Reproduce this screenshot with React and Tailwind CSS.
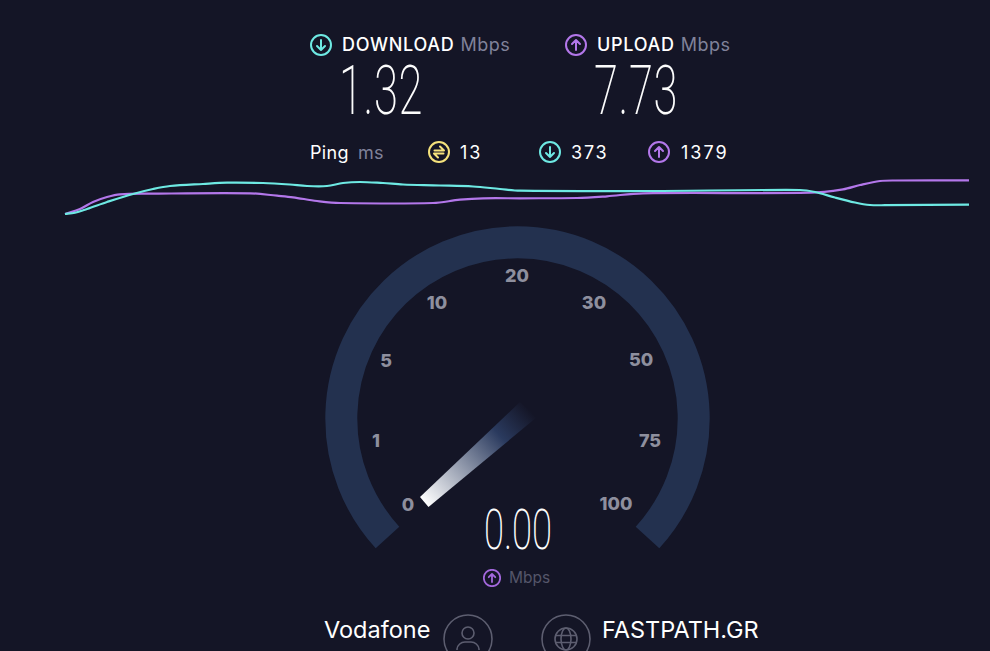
const cyanPts = [[65,214],[75,212.7],[87,209],[107,202],[133,194],[153,189],[170,186],[203,184],[227,182.7],[263,183],[290,184.5],[307,186],[327,186],[343,183],[360,182],[383,183],[403,184.5],[440,185.5],[473,186.5],[500,189],[520,190.7],[643,191],[800,190],[815,192],[835,197.5],[855,202.5],[870,205],[885,205.2],[969,204.7]];
const purplePts = [[65,214],[80,209],[93,202],[107,197],[120,194.3],[150,193.7],[250,193.3],[277,195.7],[293,197.3],[317,201],[340,203],[433,203],[460,199.7],[483,198.3],[520,198.3],[577,198],[607,196.3],[643,193.3],[810,192.7],[843,189.3],[860,185],[880,181],[895,180.5],[969,180.3]];

function smooth(pts, oy) {
  let d = `M${pts[0][0]} ${pts[0][1] - oy}`;
  for (let i = 0; i < pts.length - 1; i++) {
    const p0 = pts[Math.max(0, i - 1)], p1 = pts[i], p2 = pts[i + 1], p3 = pts[Math.min(pts.length - 1, i + 2)];
    const dx = p2[0] - p1[0];
    const m1 = (p2[1] - p0[1]) / (p2[0] - p0[0]);
    const m2 = (p3[1] - p1[1]) / (p3[0] - p1[0]);
    const c1x = p1[0] + dx / 3, c1y = p1[1] + (m1 * dx) / 3;
    const c2x = p2[0] - dx / 3, c2y = p2[1] - (m2 * dx) / 3;
    d += ` C${c1x.toFixed(1)} ${(c1y - oy).toFixed(1)} ${c2x.toFixed(1)} ${(c2y - oy).toFixed(1)} ${p2[0]} ${(p2[1] - oy).toFixed(1)}`;
  }
  return d;
}

function ArrowIcon({ dir, color, size = 22, sw = 2 }) {
  return (
    <svg width={size} height={size} viewBox="0 0 22 22" fill="none" stroke={color} strokeWidth={sw} strokeLinecap="round" strokeLinejoin="round" className="shrink-0">
      <circle cx="11" cy="11" r="10" />
      {dir === "down" ? <path d="M11 6v10M7 12l4 4 4-4" /> : <path d="M11 16V6M7 10l4-4 4 4" />}
    </svg>
  );
}

function PingIcon() {
  return (
    <svg width="22" height="22" viewBox="0 0 22 22" fill="none" stroke="#f5e27c" strokeWidth="2" strokeLinecap="round" strokeLinejoin="round" className="shrink-0">
      <circle cx="11" cy="11" r="10" />
      <path d="M6.5 9.5h9.5l-4-4M15.5 12.5H6l4 4" />
    </svg>
  );
}

const F = { fontFamily: 'Inter, "Noto Sans", sans-serif' };

function Big({ children }) {
  return (
    <div className="h-[72px] w-[140px] ml-[29px] origin-left scale-x-[0.64] opacity-[0.99] text-[68px] leading-[72px] font-extralight text-white whitespace-nowrap tracking-[1px]" style={{ fontFamily: 'Roboto, sans-serif' }}>
      {children}
    </div>
  );
}

function Stat({ label, dir, color }) {
  return (
    <div className="flex items-center h-[22px] leading-[22px] whitespace-nowrap">
      <ArrowIcon dir={dir} color={color} />
      <span className="ml-[10px] text-[18px] font-medium text-white tracking-[0.7px]">{label}</span>
      <span className="ml-[6px] text-[18px] text-[#80829a] tracking-[0.5px]">Mbps</span>
    </div>
  );
}

const ticks = [
  ["0", "left-[408px] top-[285px]"],
  ["1", "left-[376px] top-[221px]"],
  ["5", "left-[386px] top-[141px]"],
  ["10", "left-[437px] top-[83px]"],
  ["20", "left-[517px] top-[56px]"],
  ["30", "left-[594px] top-[83px]"],
  ["50", "left-[641px] top-[140px]"],
  ["75", "left-[650px] top-[221px]"],
  ["100", "left-[616px] top-[284px]"],
];

export default function App() {
  return (
    <div className="w-[990px] h-[651px] overflow-hidden bg-[#141526] flex flex-col" style={F}>
      <div className="pl-[310px] pt-[34px] flex flex-col">
        <div className="flex">
          <div className="w-[255px]">
            <Stat label="DOWNLOAD" dir="down" color="#6ee9e3" />
          </div>
          <div>
            <Stat label="UPLOAD" dir="up" color="#b377ea" />
          </div>
        </div>
        <div className="flex -mt-[1px]">
          <div className="w-[255px]"><Big>1.32</Big></div>
          <div><Big>7.73</Big></div>
        </div>
        <div className="flex items-center h-[22px] mt-[14px] text-[18px] text-white whitespace-nowrap">
          <span className="w-[48px] tracking-[0.3px]">Ping</span>
          <span className="w-[70px] text-[#80829a] tracking-[0.3px]">ms</span>
          <PingIcon />
          <span className="w-[89px] pl-[10px] tracking-[2px]">13</span>
          <ArrowIcon dir="down" color="#6ee9e3" />
          <span className="w-[87px] pl-[10px] tracking-[1.8px]">373</span>
          <ArrowIcon dir="up" color="#b377ea" />
          <span className="pl-[11px] tracking-[2px]">1379</span>
        </div>
      </div>

      <svg width="990" height="46" viewBox="0 0 990 46" fill="none" className="block mt-[11px] shrink-0">
        <path d={smooth(purplePts, 174)} stroke="#b377ea" strokeWidth="2.2" />
        <path d={smooth(cyanPts, 174)} stroke="#6ee9e3" strokeWidth="2.2" />
      </svg>

      <div className="relative h-[391px] shrink-0">
        <svg width="990" height="391" viewBox="0 0 990 391" fill="none" className="absolute inset-0">
          <defs>
            <linearGradient id="needle" gradientUnits="userSpaceOnUse" x1="424" y1="282" x2="529" y2="189">
              <stop offset="0" stopColor="#ffffff" />
              <stop offset="0.72" stopColor="#2a3a5e" />
              <stop offset="1" stopColor="#2a3a5e" stopOpacity="0" />
            </linearGradient>
          </defs>
          <path d="M387.5 317.5 A176.2 176.2 0 1 1 647.5 317.5" stroke="#23314f" strokeWidth="32" />
          <polygon points="420,277 428.5,287 537,197 520,182" fill="url(#needle)" />
        </svg>
        {ticks.map(([t, pos]) => (
          <span key={t} className={`absolute ${pos} -translate-x-1/2 -translate-y-1/2 text-[18px] leading-none font-extrabold text-[#8e8f9e]`}>{t}</span>
        ))}
        <span className="absolute left-[518px] top-[310px] -translate-x-1/2 -translate-y-1/2 scale-x-[0.66] opacity-[0.99] text-[55px] leading-none font-extralight text-white" style={{ fontFamily: 'Roboto, sans-serif' }}>0.00</span>
        <div className="absolute left-[483px] top-[347px] flex items-center gap-[8px]">
          <ArrowIcon dir="up" color="#a368dc" size={18} sw={2.2} />
          <span className="text-[15.5px] leading-[22px] text-[#55566a]">Mbps</span>
        </div>
      </div>

      <div className="relative flex-1">
        <div className="absolute left-[324px] top-[4px] flex text-[23.5px] leading-[30px] text-white whitespace-nowrap">
          <span className="w-[119px]">Vodafone</span>
          <svg width="50" height="50" viewBox="0 0 50 50" fill="none" stroke="#5d5e70" strokeWidth="1.6" className="shrink-0 mt-[-1px]">
            <circle cx="25" cy="25" r="24" />
            <circle cx="25" cy="19" r="6" />
            <path d="M14 36v-1a8 8 0 0 1 8-7h6a8 8 0 0 1 8 7v1" />
          </svg>
          <svg width="50" height="50" viewBox="0 0 50 50" fill="none" stroke="#5d5e70" strokeWidth="1.6" className="shrink-0 mt-[-1px] ml-[48px]">
            <circle cx="25" cy="25" r="24" />
            <circle cx="25" cy="25" r="11" />
            <ellipse cx="25" cy="25" rx="5" ry="11" />
            <path d="M14 21.5h22M14 28.5h22" />
          </svg>
          <span className="ml-[11px]">FASTPATH.GR</span>
        </div>
      </div>
    </div>
  );
}
